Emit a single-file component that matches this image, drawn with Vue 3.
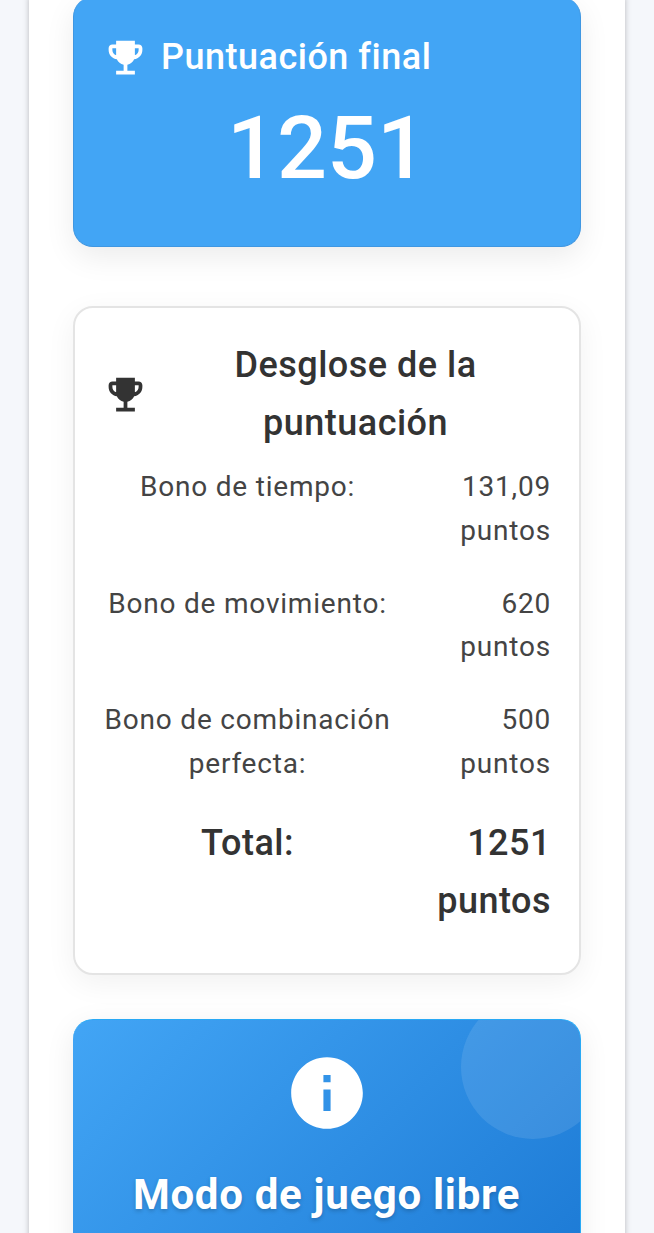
<script setup>
const trophy = "M19 5h-2V3H7v2H5c-1.1 0-2 .9-2 2v1c0 2.55 1.92 4.63 4.39 4.94.63 1.5 1.98 2.63 3.61 2.96V19H7v2h10v-2h-4v-3.1c1.63-.33 2.98-1.46 3.61-2.96C19.08 12.63 21 10.55 21 8V7c0-1.1-.9-2-2-2zM5 8V7h2v3.82C5.84 10.4 5 9.3 5 8zm14 0c0 1.3-.84 2.4-2 2.82V7h2v1z"
const rows = [
  { label: 'Bono de tiempo:', value: '131,09 puntos' },
  { label: 'Bono de movimiento:', value: '620 puntos' },
  { label: 'Bono de combinación perfecta:', value: '500 puntos' }
]
</script>

<template>
  <div class="page">
    <main class="sheet">
      <section class="score">
        <div class="score-head">
          <svg class="trophy" viewBox="0 0 24 24"><path :d="trophy" /></svg>
          <span>Puntuación final</span>
        </div>
        <div class="score-value">1251</div>
      </section>

      <section class="breakdown">
        <div class="breakdown-head">
          <svg class="trophy" viewBox="0 0 24 24"><path :d="trophy" /></svg>
          <h2>Desglose de la puntuación</h2>
        </div>
        <div v-for="row in rows" :key="row.label" class="row">
          <span class="label">{{ row.label }}</span>
          <span class="value">{{ row.value }}</span>
        </div>
        <div class="row total">
          <span class="label">Total:</span>
          <span class="value">1251 puntos</span>
        </div>
      </section>

      <section class="free">
        <span class="blob"></span>
        <svg class="info" viewBox="0 0 24 24"><path d="M12 2C6.48 2 2 6.48 2 12s4.48 10 10 10 10-4.48 10-10S17.52 2 12 2zm1 15h-2v-6h2v6zm0-8h-2V7h2v2z" /></svg>
        <h2>Modo de juego libre</h2>
      </section>
    </main>
  </div>
</template>

<style>
html, body { margin: 0; background: #f5f7fb; }
</style>

<style scoped>
.page {
  height: 1233px;
  overflow: hidden;
  background: #f5f7fb;
  font-family: Roboto, "Liberation Sans", sans-serif;
  color: #333;
}
.sheet {
  width: 596px;
  margin: -3px 0 0 29px;
  padding: 0 44px 40px;
  box-sizing: border-box;
  background: #fff;
  box-shadow: 0 0 6px rgba(0, 0, 0, 0.25);
  min-height: 1400px;
}
.score {
  height: 250px;
  box-sizing: border-box;
  padding: 34px 30px 0;
  background: #42a5f5;
  border-radius: 20px;
  border: 1px solid #3f97e2;
  border-top: 0;
  color: #fff;
  box-shadow: 0 10px 30px rgba(0, 0, 0, 0.08);
}
.score-head {
  display: flex;
  align-items: center;
  gap: 13px;
  font-size: 36px;
  font-weight: 500;
  letter-spacing: 0.5px;
  line-height: 52px;
  margin-left: -1px;
}
.trophy { width: 45px; height: 45px; fill: currentColor; flex: none; }
.score-value {
  margin-top: 13px;
  text-align: center;
  font-size: 88px;
  font-weight: 500;
  line-height: 104px;
}
.breakdown {
  margin-top: 59px;
  height: 669px;
  box-sizing: border-box;
  padding: 28px 30px 0;
  background: #fff;
  border: 2px solid #e4e4e4;
  border-radius: 20px;
  box-shadow: 0 8px 30px rgba(0, 0, 0, 0.06);
}
.breakdown-head {
  display: flex;
  align-items: center;
  gap: 13px;
  margin: 0 -1px 13px -2px;
}
.breakdown-head h2 {
  margin: 0;
  flex: 1;
  text-align: center;
  font-size: 36px;
  font-weight: 500;
  letter-spacing: 0.5px;
  line-height: 58px;
}
.row {
  display: grid;
  grid-template-columns: 287px 1fr;
  margin: 0 -2px 29.5px -1px;
  font-size: 28px;
  letter-spacing: 0.8px;
  line-height: 43.5px;
  text-align: center;
  color: #444;
}
.row .value { text-align: right; justify-self: end; width: 120px; }
.row.total {
  margin: -1px -2px 0 -1px;
  font-size: 36px;
  font-weight: 500;
  letter-spacing: 0.5px;
  line-height: 58px;
  color: #333;
}
.total .value { width: 130px; }
.free {
  position: relative;
  overflow: hidden;
  margin-top: 44px;
  height: 320px;
  box-sizing: border-box;
  padding-top: 30px;
  border-top: 1px solid #29a9f5;
  border-right: 1px solid #29a9f5;
  border-radius: 20px 20px 0 0;
  background: linear-gradient(135deg, #42a5f5, #1976d2);
  color: #fff;
  text-align: center;
  box-shadow: 0 8px 30px rgba(0, 0, 0, 0.08);
}
.blob {
  position: absolute;
  top: -25px;
  right: -25px;
  width: 144px;
  height: 144px;
  border-radius: 50%;
  background: rgba(255, 255, 255, 0.1);
}
.info { display: block; width: 86px; height: 86px; margin: 0 auto; fill: #fff; }
.free h2 {
  margin: 29px 0 0;
  font-size: 42px;
  font-weight: 700;
  letter-spacing: 0.7px;
  line-height: 60px;
  text-shadow: 0 2px 4px rgba(0, 0, 0, 0.2);
}
</style>
